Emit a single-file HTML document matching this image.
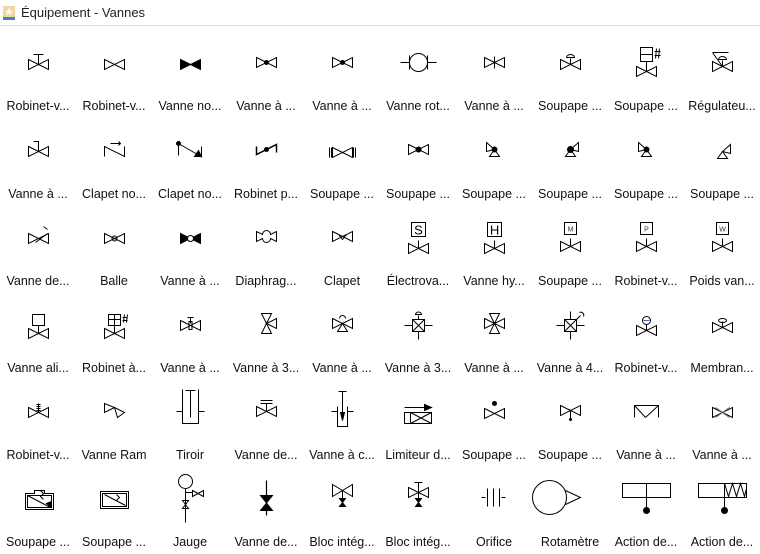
<!DOCTYPE html>
<html><head><meta charset="utf-8"><style>
body{margin:0;width:760px;height:554px;background:#fff;overflow:hidden;position:relative;font-family:"Liberation Sans","Noto Sans CJK SC",sans-serif}
.t{position:absolute;left:0;top:0;width:760px;height:25px;border-bottom:1px solid #d9d9d9}
.t span{position:absolute;left:21px;top:5px;font-size:13px;color:#222}
.l{position:absolute;width:76px;text-align:center;font-size:12.5px;color:#111;white-space:nowrap;margin-top:2px}
svg{position:absolute;left:0;top:0}
</style></head><body>
<div class="t"><svg width="16" height="20" style="left:3px;top:3px"><rect x="0" y="3" width="12" height="12" fill="#f2d6a0"/><rect x="0" y="14" width="12" height="3" fill="#4a7fc0"/><text x="6" y="12" font-size="9" fill="#fff" text-anchor="middle">★</text></svg><span>Équipement - Vannes</span></div>
<svg width="760" height="554" fill="none" stroke="#000" stroke-width="1">
<defs><path id="v" d="M-10,-5L10,5V-5L-10,5Z"/><path id="fv" d="M-10,-5L10,5V-5L-10,5Z" fill="#000"/></defs>
<g transform="translate(38.5,64.5)"><use href="#v"/><path d="M0,0V-10M-5,-10H5"/></g>
<g transform="translate(114.5,64.5)"><use href="#v"/></g>
<g transform="translate(190.5,64.5)"><use href="#fv"/></g>
<g transform="translate(266.5,62.5)"><use href="#v"/><circle r="2" fill="#000"/></g>
<g transform="translate(342.5,62.5)"><use href="#v"/><circle r="2" fill="#000"/></g>
<g transform="translate(418.5,62.5)"><circle r="9"/><path d="M-9,-7V7M9,-7V7M-18,0H-9M9,0H18"/></g>
<g transform="translate(494.5,62.5)"><use href="#v"/><path d="M0,-6V6"/></g>
<g transform="translate(570.5,64.5)"><use href="#v"/><path d="M0,0V-6M-4,-7A4,3 0 0 1 4,-7Z"/></g>
<g transform="translate(646.5,71.5)"><use href="#v"/><path d="M0,0V-10"/><rect x="-6" y="-24" width="12" height="14"/><path d="M-6,-17H6M8,-20H14M8,-16H14M10,-23L9,-13M13,-23L12,-13"/></g>
<g transform="translate(722.5,66.5)"><use href="#v"/><path d="M0,0V-6M-4,-7A4,3 0 0 1 4,-7ZM-10,-14H6M-10,-14L0,0"/></g>
<g transform="translate(38.5,151.5)"><use href="#v"/><path d="M0,0V-10H-5"/></g>
<g transform="translate(114.5,151.5)"><path d="M-10,5V-5L10,5V-5M-4,-8H6M4,-10L6,-8L4,-6"/></g>
<g transform="translate(190.5,151.5)"><path d="M-12,-8L7,3M-12,-8V4M11,-5V6"/><circle cx="-12" cy="-8" r="2" fill="#000"/><path d="M4,5L8,-1L11,5Z" fill="#000"/></g>
<g transform="translate(266.5,149.5)"><path d="M-10,-3V5L10,-5V3" stroke-width="1.5"/><circle r="2" fill="#000"/></g>
<g transform="translate(342.5,152.5)"><use href="#v"/><path d="M-13,-5V5M-11,-5V5M11,-5V5M13,-5V5"/></g>
<g transform="translate(418.5,149.5)"><use href="#v"/><circle r="2.5" fill="#000"/></g>
<g transform="translate(494.5,149.5)"><path d="M-8,-7L0,0L-8,2ZM0,0L-5,7H5Z"/><circle r="2.5" fill="#000"/></g>
<g transform="translate(570.5,149.5)"><path d="M8,-7L0,0L8,2ZM0,0L-5,7H5Z"/><circle r="3" fill="#000"/></g>
<g transform="translate(646.5,149.5)"><path d="M-8,-7L0,0L-8,2ZM0,0L-5,7H5Z"/><circle r="2.5" fill="#000"/></g>
<g transform="translate(722.5,151.5)"><path d="M8,-7L0,0L8,2ZM0,0L-5,7H5Z"/></g>
<g transform="translate(38.5,238.5)"><use href="#v"/><path d="M-3,4L9,-5M5,-12L9,-9"/></g>
<g transform="translate(114.5,238.5)"><use href="#v"/><circle r="2.5"/></g>
<g transform="translate(190.5,238.5)"><use href="#fv"/><circle r="3" fill="#fff"/></g>
<g transform="translate(266.5,236.5)"><path d="M-10,-5V5L-4,2A4,4 0 0 0 4,2L10,5V-5L4,-2A4,4 0 0 0 -4,-2Z"/></g>
<g transform="translate(342.5,236.5)"><use href="#v"/><path d="M-4,-2L0,3L4,-2"/></g>
<g transform="translate(418.5,248.5)"><use href="#v"/><path d="M0,0V-8"/><rect x="-7" y="-26" width="14" height="14"/><text x="0" y="-14" font-size="13" text-anchor="middle" fill="#000" stroke="none" font-family="Liberation Sans">S</text></g>
<g transform="translate(494.5,248.5)"><use href="#v"/><path d="M0,0V-8"/><rect x="-7" y="-26" width="14" height="14"/><text x="0" y="-14" font-size="13" text-anchor="middle" fill="#000" stroke="none" font-family="Liberation Sans">H</text></g>
<g transform="translate(570.5,246.5)"><use href="#v"/><path d="M0,0V-8"/><rect x="-6" y="-24" width="12" height="12"/><text x="0" y="-15" font-size="7" text-anchor="middle" fill="#333" stroke="none" font-family="Liberation Sans">M</text></g>
<g transform="translate(646.5,246.5)"><use href="#v"/><path d="M0,0V-8"/><rect x="-6" y="-24" width="12" height="12"/><text x="0" y="-15" font-size="7" text-anchor="middle" fill="#333" stroke="none" font-family="Liberation Sans">P</text></g>
<g transform="translate(722.5,246.5)"><use href="#v"/><path d="M0,0V-8"/><rect x="-6" y="-24" width="12" height="12"/><text x="0" y="-15" font-size="7" text-anchor="middle" fill="#333" stroke="none" font-family="Liberation Sans">W</text></g>
<g transform="translate(38.5,333.5)"><use href="#v"/><path d="M0,0V-8"/><rect x="-6" y="-19" width="12" height="11"/></g>
<g transform="translate(114.5,333.5)"><use href="#v"/><path d="M0,0V-8"/><rect x="-6" y="-19" width="12" height="11"/><path d="M-6,-14H6M0,-19V-8M8,-16H13M8,-13H13M10,-19L9,-11M13,-19L12,-11"/></g>
<g transform="translate(190.5,325.5)"><use href="#v"/><path d="M0,-2V-8M-3,-8H3M-1.5,-4H1.5V4H-1.5Z"/></g>
<g transform="translate(266.5,323.5)"><path d="M-5,-10H5L-5,10H5Z"/><path d="M10,-5V5L0,0Z"/></g>
<g transform="translate(342.5,323.5)"><use href="#v"/><path d="M0,0L-5,8H5ZM-3,-5A3,3 0 0 1 3,-5"/></g>
<g transform="translate(418.5,325.5)"><rect x="-6" y="-6" width="12" height="12"/><path d="M-6,-6L6,6M-6,6L6,-6M-14,0H-6M6,0H14M0,6V14M0,-6V-10M-3,-11A3,2.5 0 0 1 3,-11Z"/></g>
<g transform="translate(494.5,323.5)"><path d="M-10,-5L10,5V-5L-10,5ZM-5,-10H5L-5,10H5Z"/></g>
<g transform="translate(570.5,325.5)"><rect x="-6" y="-6" width="12" height="12"/><path d="M-6,-6L6,6M-6,6L6,-6M-14,0H-6M6,0H14M0,6V14M0,-6V-14M6,-6L10,-10M9,-13A3,3 0 0 1 13,-9"/></g>
<g transform="translate(646.5,330.5)"><use href="#v"/><path d="M0,0V-6"/><circle cy="-10" r="4"/><path d="M-3,-10H3" stroke="#46a"/></g>
<g transform="translate(722.5,327.5)"><use href="#v"/><path d="M0,0V-6"/><ellipse cy="-7" rx="4" ry="2"/></g>
<g transform="translate(38.5,412.5)"><use href="#v"/><path d="M0,0V-9M-2,-8H2M-2,-6H2M-2,-4H2M-2,-2H2"/></g>
<g transform="translate(114.5,409.5)"><path d="M-10,-6V3L0,-2ZM0,-2L3,8L10,3Z"/></g>
<g transform="translate(190.5,411.5)"><path d="M-8,-22V12H8V-22M0,-21V6M-5,-21H5M-14,0H-8M8,0H14"/></g>
<g transform="translate(266.5,411.5)"><use href="#v"/><path d="M0,0V-8M-6,-8H6M-6,-11H6"/></g>
<g transform="translate(342.5,412.5)"><path d="M-5,-6V14H5V-6M0,-21V4M-4,-21H4M-11,-1H-5M5,-1H11"/><path d="M-2,0H2L0,8Z" fill="#000"/></g>
<g transform="translate(418.5,416.5)"><rect x="-14" y="-4" width="27" height="11"/><path d="M-8,-4V7M-8,-4L13,7M-8,7L13,-4M-14,-9H12"/><path d="M6,-12L13,-9L6,-6Z" fill="#000"/></g>
<g transform="translate(494.5,413.5)"><use href="#v"/><circle cy="-10" r="2" fill="#000"/></g>
<g transform="translate(570.5,410.5)"><use href="#v"/><path d="M0,0V9"/><circle cy="9" r="1" fill="#000"/></g>
<g transform="translate(646.5,411.5)"><path d="M-12,6V-6H12V6M-12,-6L-1,6M-1,6L12,-6"/></g>
<g transform="translate(722.5,412.5)"><use href="#v"/><path d="M-7,-5L7,5M-7,5L7,-5" stroke="#666"/></g>
<g transform="translate(38.5,500.5)"><path d="M-13,-7H-4V-10H6V-7H15V9H-13ZM-11,-5H13V7H-11ZM-11,-5L12,7M2,-10L5,-7L2,-4L5,-1"/><path d="M8,3L13,1V7Z" fill="#000"/></g>
<g transform="translate(114.5,499.5)"><rect x="-14" y="-8" width="28" height="17"/><rect x="-12" y="-6" width="24" height="13"/><path d="M-10,-5L11,6M2,-5L5,-2L2,1"/></g>
<g transform="translate(190.5,495.5)"><circle cx="-5" cy="-14" r="7"/><path d="M-5,-7V27M-5,-3H2M2,-5L13,1V-5L2,1ZM-8,5L-2,13H-8L-2,5Z"/></g>
<g transform="translate(266.5,500.5)"><path d="M0,-20V-5M0,5V15" stroke-width="1.2"/><path d="M-6,-5H6L-6,10H6Z" fill="#000"/></g>
<g transform="translate(342.5,492.5)"><path d="M-10,-8V4L10,-8V4Z"/><path d="M0,-2V6"/><path d="M-3,6H3L-3,14H3Z" fill="#000"/></g>
<g transform="translate(418.5,492.5)"><path d="M-10,-5L10,5V-5L-10,5ZM0,-10V6M-4,-10H4"/><path d="M-3,6H3L-3,14H3Z" fill="#000"/></g>
<g transform="translate(494.5,497.5)"><path d="M-13,0H-9M-7,-9V9M-1,-9V9M5,-9V9M7,0H11"/></g>
<g transform="translate(549.5,497.5)"><circle r="17"/><path d="M16,-7L31,0L16,7"/></g>
<g transform="translate(646.5,491.5)"><rect x="-24" y="-8" width="48" height="14"/><path d="M0,-8V19"/><circle cy="19" r="3" fill="#000"/></g>
<g transform="translate(722.5,491.5)"><rect x="-24" y="-8" width="48" height="14"/><path d="M2,-8V19M2,-8L6,5L10,-8L14,5L18,-8L22,5L24,-3"/><circle cx="2" cy="19" r="3" fill="#000"/></g>
</svg>
<div class="l" style="left:0;top:97px">Robinet-v...</div><div class="l" style="left:76px;top:97px">Robinet-v...</div><div class="l" style="left:152px;top:97px">Vanne no...</div><div class="l" style="left:228px;top:97px">Vanne à ...</div><div class="l" style="left:304px;top:97px">Vanne à ...</div><div class="l" style="left:380px;top:97px">Vanne rot...</div><div class="l" style="left:456px;top:97px">Vanne à ...</div><div class="l" style="left:532px;top:97px">Soupape ...</div><div class="l" style="left:608px;top:97px">Soupape ...</div><div class="l" style="left:684px;top:97px">Régulateu...</div>
<div class="l" style="left:0;top:185px">Vanne à ...</div><div class="l" style="left:76px;top:185px">Clapet no...</div><div class="l" style="left:152px;top:185px">Clapet no...</div><div class="l" style="left:228px;top:185px">Robinet p...</div><div class="l" style="left:304px;top:185px">Soupape ...</div><div class="l" style="left:380px;top:185px">Soupape ...</div><div class="l" style="left:456px;top:185px">Soupape ...</div><div class="l" style="left:532px;top:185px">Soupape ...</div><div class="l" style="left:608px;top:185px">Soupape ...</div><div class="l" style="left:684px;top:185px">Soupape ...</div>
<div class="l" style="left:0;top:272px">Vanne de...</div><div class="l" style="left:76px;top:272px">Balle</div><div class="l" style="left:152px;top:272px">Vanne à ...</div><div class="l" style="left:228px;top:272px">Diaphrag...</div><div class="l" style="left:304px;top:272px">Clapet</div><div class="l" style="left:380px;top:272px">Électrova...</div><div class="l" style="left:456px;top:272px">Vanne hy...</div><div class="l" style="left:532px;top:272px">Soupape ...</div><div class="l" style="left:608px;top:272px">Robinet-v...</div><div class="l" style="left:684px;top:272px">Poids van...</div>
<div class="l" style="left:0;top:359px">Vanne ali...</div><div class="l" style="left:76px;top:359px">Robinet à...</div><div class="l" style="left:152px;top:359px">Vanne à ...</div><div class="l" style="left:228px;top:359px">Vanne à 3...</div><div class="l" style="left:304px;top:359px">Vanne à ...</div><div class="l" style="left:380px;top:359px">Vanne à 3...</div><div class="l" style="left:456px;top:359px">Vanne à ...</div><div class="l" style="left:532px;top:359px">Vanne à 4...</div><div class="l" style="left:608px;top:359px">Robinet-v...</div><div class="l" style="left:684px;top:359px">Membran...</div>
<div class="l" style="left:0;top:446px">Robinet-v...</div><div class="l" style="left:76px;top:446px">Vanne Ram</div><div class="l" style="left:152px;top:446px">Tiroir</div><div class="l" style="left:228px;top:446px">Vanne de...</div><div class="l" style="left:304px;top:446px">Vanne à c...</div><div class="l" style="left:380px;top:446px">Limiteur d...</div><div class="l" style="left:456px;top:446px">Soupape ...</div><div class="l" style="left:532px;top:446px">Soupape ...</div><div class="l" style="left:608px;top:446px">Vanne à ...</div><div class="l" style="left:684px;top:446px">Vanne à ...</div>
<div class="l" style="left:0;top:533px">Soupape ...</div><div class="l" style="left:76px;top:533px">Soupape ...</div><div class="l" style="left:152px;top:533px">Jauge</div><div class="l" style="left:228px;top:533px">Vanne de...</div><div class="l" style="left:304px;top:533px">Bloc intég...</div><div class="l" style="left:380px;top:533px">Bloc intég...</div><div class="l" style="left:456px;top:533px">Orifice</div><div class="l" style="left:532px;top:533px">Rotamètre</div><div class="l" style="left:608px;top:533px">Action de...</div><div class="l" style="left:684px;top:533px">Action de...</div>
</body></html>
